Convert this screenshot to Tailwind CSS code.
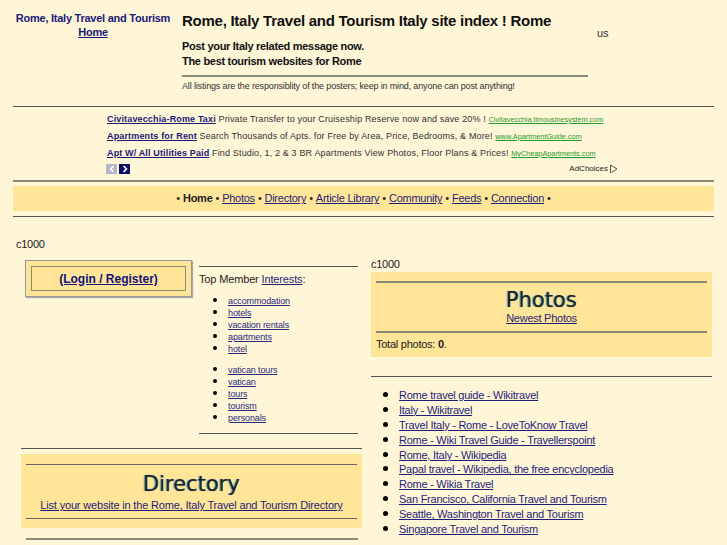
<!DOCTYPE html>
<html lang="en">
  <head>
    <meta charset="UTF-8" />
    <title>Rome, Italy Travel and Tourism</title>
    <script src="https://cdn.jsdelivr.net/npm/@tailwindcss/browser@4"></script>
  </head>
  <body class="bg-[#fff5d7] text-[#222] font-['Liberation_Sans',sans-serif] text-[11px] tracking-[-0.25px] h-[545px] overflow-hidden">
    <div class="ml-[13px] w-[701px]">
      <!-- Header -->
      <div class="flex h-[107px] border-b border-[#555]">
        <div class="w-[160px] pt-[11px] text-center font-bold text-[11px] tracking-[-0.25px] leading-[14px] text-[#1a1a78]">
          <div class="whitespace-nowrap">Rome, Italy Travel and Tourism</div>
          <a href="#" class="underline">Home</a>
        </div>
        <div class="ml-[9px] w-[406px] shrink-0">
          <h1 class="mt-[12px] font-bold text-[15px] tracking-[-0.26px] leading-[18px] text-[#111] whitespace-nowrap">Rome, Italy Travel and Tourism Italy site index ! Rome</h1>
          <p class="mt-[9px] font-bold text-[11px] tracking-[-0.3px] leading-[15px] text-[#111]">Post your Italy related message now.<br />The best tourism websites for Rome</p>
          <div class="mt-[6px] border-t-2 border-[#8a8a78]"></div>
          <p class="mt-[3px] text-[9px] tracking-[-0.15px] leading-[12px] text-[#333] whitespace-nowrap">All listings are the responsiblity of the posters; keep in mind, anyone can post anything!</p>
        </div>
        <div class="ml-[9px] pt-[27px] text-[11px] tracking-normal leading-[13px] text-[#333]">us</div>
      </div>

      <!-- Ads -->
      <div class="h-[75px] border-b-2 border-[#8a8a78] pl-[94px] pr-[84px] pt-[4px] text-[9px] text-[#333] tracking-[0.15px] whitespace-nowrap">
        <div class="h-[17px] leading-[17px]"><a href="#" class="font-bold underline text-[#1a1a78]">Civitavecchia-Rome Taxi</a> Private Transfer to your Cruiseship Reserve now and save 20% ! <a href="#" class="underline text-[#2a9a2a] text-[7.3px] tracking-normal">Civitavecchia.limousinesystem.com</a></div>
        <div class="h-[17px] leading-[17px]"><a href="#" class="font-bold underline text-[#1a1a78]">Apartments for Rent</a> Search Thousands of Apts. for Free by Area, Price, Bedrooms, &amp; More! <a href="#" class="underline text-[#2a9a2a] text-[7.3px] tracking-normal">www.ApartmentGuide.com</a></div>
        <div class="h-[17px] leading-[17px]"><a href="#" class="font-bold underline text-[#1a1a78]">Apt W/ All Utilities Paid</a> Find Studio, 1, 2 &amp; 3 BR Apartments View Photos, Floor Plans &amp; Prices! <a href="#" class="underline text-[#2a9a2a] text-[7.3px] tracking-normal">MyCheapApartments.com</a></div>
        <div class="flex items-center justify-between h-[12px] mt-[1px] -ml-[1px] pr-[12px]">
          <div class="flex gap-[2px]">
            <span class="w-[11px] h-[10px] bg-[#b4b4c4] flex items-center justify-center">
              <svg width="6" height="8" viewBox="0 0 6 8"><path d="M4.5 1 L1.5 4 L4.5 7" fill="none" stroke="#fff" stroke-width="1.6" /></svg>
            </span>
            <span class="w-[11px] h-[10px] bg-[#0c0c64] flex items-center justify-center">
              <svg width="6" height="8" viewBox="0 0 6 8"><path d="M1.5 1 L4.5 4 L1.5 7" fill="none" stroke="#fff" stroke-width="1.6" /></svg>
            </span>
          </div>
          <div class="flex items-center gap-[1px] text-[8px] tracking-normal text-[#222]">
            AdChoices
            <svg width="9" height="10" viewBox="0 0 9 10"><path d="M1.5 1 L8 5 L2.5 8.5 M1.5 1 L1.5 9" fill="none" stroke="#555" stroke-width="1" /></svg>
          </div>
        </div>
      </div>

      <!-- Nav -->
      <nav class="mt-[4px] h-[25px] bg-[#ffe597] flex items-center justify-center gap-[3px] text-[11px] text-[#222]">
        <span>•</span><b>Home</b><span>•</span>
        <a href="#" class="underline text-[#1f1f7a]">Photos</a><span>•</span>
        <a href="#" class="underline text-[#1f1f7a]">Directory</a><span>•</span>
        <a href="#" class="underline text-[#1f1f7a]">Article Library</a><span>•</span>
        <a href="#" class="underline text-[#1f1f7a]">Community</a><span>•</span>
        <a href="#" class="underline text-[#1f1f7a]">Feeds</a><span>•</span>
        <a href="#" class="underline text-[#1f1f7a]">Connection</a><span>•</span>
      </nav>
      <div class="mt-[5px] border-t border-[#555]"></div>

      <!-- Main columns -->
      <div class="flex">
        <div class="w-[349px] ml-[3px] shrink-0">
          <div class="mt-[21px] h-[13px] leading-[13px] text-[11px]">c1000</div>
          <div class="flex mt-[9px] ml-[9px]">
            <div class="w-[167px] h-[37px] shrink-0 bg-[#ffe597] border border-[#999] shadow-[1px_1px_1px_#aaa] p-[5px]">
              <div class="h-[25px] border border-[#8a8a78] flex items-center justify-center font-bold text-[12px] tracking-normal">
                <a href="#" class="underline text-[#14147a]">(Login / Register)</a>
              </div>
            </div>
            <div class="ml-[7px] w-[159px] mt-[6px]">
              <div class="border-t border-[#555]"></div>
              <div class="mt-[6px] leading-[13px] tracking-[-0.15px]">Top Member <a href="#" class="underline text-[#1f1f7a]">Interests</a>:</div>
              <ul class="mt-[8px] ml-[29px] list-disc text-[9px] tracking-[-0.12px] leading-[12px] text-[#000] marker:text-[13px] *:h-[12px]">
                <li><a href="#" class="underline text-[#2a2a80]">accommodation</a></li>
                <li><a href="#" class="underline text-[#2a2a80]">hotels</a></li>
                <li><a href="#" class="underline text-[#2a2a80]">vacation rentals</a></li>
                <li><a href="#" class="underline text-[#2a2a80]">apartments</a></li>
                <li><a href="#" class="underline text-[#2a2a80]">hotel</a></li>
              </ul>
              <ul class="mt-[9px] ml-[29px] list-disc text-[9px] tracking-[-0.12px] leading-[12px] text-[#000] marker:text-[13px] *:h-[12px]">
                <li><a href="#" class="underline text-[#2a2a80]">vatican tours</a></li>
                <li><a href="#" class="underline text-[#2a2a80]">vatican</a></li>
                <li><a href="#" class="underline text-[#2a2a80]">tours</a></li>
                <li><a href="#" class="underline text-[#2a2a80]">tourism</a></li>
                <li><a href="#" class="underline text-[#2a2a80]">personals</a></li>
              </ul>
              <div class="mt-[10px] border-t border-[#555]"></div>
            </div>
          </div>
          <div class="ml-[5px] w-[341px] mt-[14px] border-t border-[#555]"></div>
          <div class="ml-[5px] w-[341px] mt-[5px] h-[74px] bg-[#ffe597] px-[5px] pt-[10px] text-center">
            <div class="border-t border-[#666]"></div>
            <h2 class="mt-[6px] font-['DejaVu_Sans',sans-serif] text-[21px] tracking-normal leading-[26px] text-[#222] [text-shadow:-1px_0_1px_#4a90d8]">Directory</h2>
            <a href="#" class="block mt-[1px] leading-[14px] tracking-[-0.17px] underline text-[#1f1f7a] whitespace-nowrap">List your website in the Rome, Italy Travel and Tourism Directory</a>
            <div class="mt-[6px] border-t border-[#666]"></div>
          </div>
          <div class="ml-[10px] w-[332px] mt-[10px] border-t-2 border-[#8a8a78]"></div>
        </div>

        <div class="ml-[6px] w-[341px] shrink-0">
          <div class="mt-[41px] h-[13px] leading-[13px] text-[11px]">c1000</div>
          <div class="mt-[1px] h-[85px] bg-[#ffe597] px-[5px] pt-[9px]">
            <div class="border-t-2 border-[#8a8a78]"></div>
            <div class="text-center">
              <h2 class="mt-[6px] font-['DejaVu_Sans',sans-serif] text-[21px] tracking-normal leading-[23px] text-[#222] [text-shadow:-1px_0_1px_#4a90d8]">Photos</h2>
              <a href="#" class="block leading-[13px] underline text-[#1f1f7a]">Newest Photos</a>
            </div>
            <div class="mt-[6px] border-t-2 border-[#8a8a78]"></div>
            <div class="mt-[4px] leading-[14px]">Total photos: <b>0</b>.</div>
          </div>
          <div class="mt-[19px] border-t border-[#555]"></div>
          <ul class="mt-[10px] ml-[28px] list-disc leading-[14.9px] text-[#000] marker:text-[15px] *:h-[14.9px]">
            <li><a href="#" class="underline text-[#1f1f7a]">Rome travel guide - Wikitravel</a></li>
            <li><a href="#" class="underline text-[#1f1f7a]">Italy - Wikitravel</a></li>
            <li><a href="#" class="underline text-[#1f1f7a]">Travel Italy - Rome - LoveToKnow Travel</a></li>
            <li><a href="#" class="underline text-[#1f1f7a]">Rome - Wiki Travel Guide - Travellerspoint</a></li>
            <li><a href="#" class="underline text-[#1f1f7a]">Rome, Italy - Wikipedia</a></li>
            <li><a href="#" class="underline text-[#1f1f7a]">Papal travel - Wikipedia, the free encyclopedia</a></li>
            <li><a href="#" class="underline text-[#1f1f7a]">Rome - Wikia Travel</a></li>
            <li><a href="#" class="underline text-[#1f1f7a]">San Francisco, California Travel and Tourism</a></li>
            <li><a href="#" class="underline text-[#1f1f7a]">Seattle, Washington Travel and Tourism</a></li>
            <li><a href="#" class="underline text-[#1f1f7a]">Singapore Travel and Tourism</a></li>
          </ul>
        </div>
      </div>
    </div>
  </body>
</html>
